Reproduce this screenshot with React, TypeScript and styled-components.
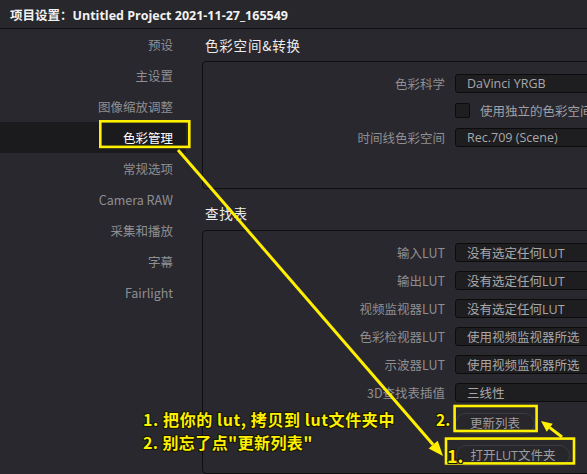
import React from "react";
import styled, { createGlobalStyle } from "styled-components";

const GlobalStyle = createGlobalStyle`
  html, body {
    margin: 0;
    padding: 0;
    background: #29282e;
    overflow: hidden;
  }
`;

const FONT = `"Open Sans", "Noto Sans CJK SC", "Noto Sans", sans-serif`;
const CJK = `"Noto Sans CJK SC", "Noto Sans", sans-serif`;
const YELLOW = "#fff000";

const Window = styled.div`
  position: relative;
  width: 587px;
  height: 474px;
  overflow: hidden;
  background: #29282e;
  display: flex;
  flex-direction: column;
  font-family: ${FONT};
`;

const TitleBar = styled.div`
  height: 28px;
  flex: none;
  display: flex;
  align-items: center;
  padding-left: 10px;
  background: #28272c;
  border-bottom: 1px solid #101012;
  color: #f2f2f2;
  font-weight: 700;
  font-size: 12.5px;
  white-space: nowrap;
`;

const Body = styled.div`
  flex: 1;
  display: flex;
  min-height: 0;
`;

const Sidebar = styled.nav`
  width: 186px;
  flex: none;
  display: flex;
  flex-direction: column;
`;

const NavItem = styled.div<{ $active?: boolean }>`
  height: 31px;
  display: flex;
  align-items: center;
  justify-content: flex-end;
  padding-right: 13px;
  font-family: ${CJK};
  font-size: 12.5px;
  color: ${(p) => (p.$active ? "#ffffff" : "#8f8f93")};
  background: ${(p) => (p.$active ? "#1b1b1e" : "transparent")};
`;

const Main = styled.main`
  flex: 1;
  display: flex;
  flex-direction: column;
  padding-left: 16px;
  min-width: 0;
`;

const SectionTitle = styled.div<{ $h: number; $pb: number }>`
  height: ${(p) => p.$h}px;
  flex: none;
  display: flex;
  align-items: flex-end;
  box-sizing: border-box;
  padding: 0 0 ${(p) => p.$pb}px 3px;
  font-family: ${CJK};
  font-size: 13.5px;
  letter-spacing: 0.8px;
  line-height: 17px;
  color: #ececec;
`;

const Panel = styled.section<{ $pb: number; $grow?: boolean }>`
  width: 420px;
  flex: ${(p) => (p.$grow ? "1" : "none")};
  box-sizing: border-box;
  border: 1px solid #0e0e10;
  border-radius: 4px 0 0 4px;
  padding: 12px 0 ${(p) => p.$pb}px 0;
`;

const FormGrid = styled.div<{ $gap: number }>`
  display: grid;
  grid-template-columns: 242px 1fr;
  column-gap: 10px;
  row-gap: ${(p) => p.$gap}px;
  align-items: center;
`;

const Label = styled.div`
  text-align: right;
  font-family: ${CJK};
  font-size: 12.5px;
  line-height: 19px;
  color: #8f8f93;
  white-space: nowrap;
`;

const Field = styled.div`
  width: 160px;
  height: 19px;
  box-sizing: border-box;
  display: flex;
  align-items: center;
  padding-left: 11px;
  background: #1e1e21;
  border: 1px solid #0c0c0d;
  border-radius: 3px;
  font-family: ${FONT};
  font-size: 12.5px;
  color: #a8a8ab;
  white-space: nowrap;
  overflow: hidden;
`;

const CheckRow = styled.div`
  display: flex;
  align-items: center;
  gap: 10px;
  height: 15px;
  white-space: nowrap;
  font-family: ${CJK};
  font-size: 12.5px;
  color: #a0a0a4;
`;

const CheckBox = styled.span`
  width: 15px;
  height: 15px;
  box-sizing: border-box;
  flex: none;
  background: #1e1e21;
  border: 1px solid #0c0c0d;
  border-radius: 2px;
`;

const Pill = styled.button<{ $w: number }>`
  width: ${(p) => p.$w}px;
  height: 21px;
  box-sizing: border-box;
  padding: 0;
  border: 1px solid #3b3b41;
  border-radius: 11px;
  background: #27262b;
  color: #9d9da1;
  font-family: ${FONT};
  font-size: 12.5px;
  line-height: 19px;
  text-align: center;
  white-space: nowrap;
`;

const ButtonCell = styled.div<{ $ml: number }>`
  margin-left: ${(p) => p.$ml}px;
`;

/* ---------- annotation overlay ---------- */

const Overlay = styled.div`
  position: absolute;
  inset: 0;
  pointer-events: none;
`;

const OverlaySvg = styled.svg`
  position: absolute;
  left: 0;
  top: 0;
`;

const Note = styled.div<{ $x: number; $y: number; $size: number; $ls?: number }>`
  position: absolute;
  left: ${(p) => p.$x}px;
  top: ${(p) => p.$y}px;
  font-family: ${CJK};
  font-weight: 700;
  font-size: ${(p) => p.$size}px;
  letter-spacing: ${(p) => p.$ls ?? 0}px;
  line-height: 23px;
  color: ${YELLOW};
  white-space: nowrap;
  text-shadow: 0 0 1px #000, 1px 1px 0 #1a1a00, -1px -1px 0 #1a1a00, 1px -1px 0 #1a1a00, -1px 1px 0 #1a1a00;
`;

const navItems = [
  "预设",
  "主设置",
  "图像缩放调整",
  "色彩管理",
  "常规选项",
  "Camera RAW",
  "采集和播放",
  "字幕",
  "Fairlight",
];

const lutRows: [string, string][] = [
  ["输入LUT", "没有选定任何LUT"],
  ["输出LUT", "没有选定任何LUT"],
  ["视频监视器LUT", "没有选定任何LUT"],
  ["色彩检视器LUT", "使用视频监视器所选"],
  ["示波器LUT", "使用视频监视器所选"],
  ["3D查找表插值", "三线性"],
];

function arrowHead(tip: { x: number; y: number }, tail: { x: number; y: number }, l: number, w: number) {
  const len = Math.hypot(tip.x - tail.x, tip.y - tail.y);
  const ux = (tip.x - tail.x) / len;
  const uy = (tip.y - tail.y) / len;
  const bx = tip.x - l * ux;
  const by = tip.y - l * uy;
  const nx = -uy;
  const ny = ux;
  return {
    base: { x: bx, y: by },
    points: `${tip.x},${tip.y} ${bx + w * nx},${by + w * ny} ${bx - w * nx},${by - w * ny}`,
  };
}

function Annotations() {
  const tip1 = { x: 443, y: 456 };
  const tail1 = { x: 178, y: 150 };
  const h1 = arrowHead(tip1, tail1, 15, 6);
  const tip2 = { x: 541, y: 421 };
  const tail2 = { x: 562, y: 437 };
  const h2 = arrowHead(tip2, tail2, 11, 5);

  return (
    <Overlay>
      <OverlaySvg width="587" height="474" viewBox="0 0 587 474">
        <g fill="none" stroke={YELLOW} strokeWidth="2.6">
          <rect x="100.3" y="121.3" width="89" height="25.6" />
          <rect x="454.6" y="406" width="82" height="25" />
          <rect x="446" y="438.6" width="128" height="24.8" />
        </g>
        <line x1={tail1.x} y1={tail1.y} x2={h1.base.x} y2={h1.base.y} stroke={YELLOW} strokeWidth="3" />
        <polygon points={h1.points} fill={YELLOW} />
        <line x1={tail2.x} y1={tail2.y} x2={h2.base.x} y2={h2.base.y} stroke={YELLOW} strokeWidth="3" />
        <polygon points={h2.points} fill={YELLOW} />
      </OverlaySvg>
      <Note $x={143} $y={408} $size={16} $ls={0.6}>
        1. 把你的 lut, 拷贝到 lut文件夹中
      </Note>
      <Note $x={143} $y={431} $size={16} $ls={0.4}>
        2. 别忘了点"更新列表"
      </Note>
      <Note $x={436} $y={408} $size={15.5}>
        2.
      </Note>
      <Note $x={447} $y={444} $size={18}>
        1.
      </Note>
    </Overlay>
  );
}

export default function App() {
  return (
    <>
      <GlobalStyle />
      <Window>
        <TitleBar>项目设置：Untitled Project 2021-11-27_165549</TitleBar>
        <Body>
          <Sidebar>
            {navItems.map((n) => (
              <NavItem key={n} $active={n === "色彩管理"}>
                {n}
              </NavItem>
            ))}
          </Sidebar>
          <Main>
            <SectionTitle $h={32} $pb={7}>色彩空间&amp;转换</SectionTitle>
            <Panel $pb={41}>
              <FormGrid $gap={10}>
                <Label>色彩科学</Label>
                <Field>DaVinci YRGB</Field>
                <span />
                <CheckRow>
                  <CheckBox />
                  使用独立的色彩空间和伽马
                </CheckRow>
                <Label>时间线色彩空间</Label>
                <Field>Rec.709 (Scene)</Field>
              </FormGrid>
            </Panel>
            <SectionTitle $h={41} $pb={8}>查找表</SectionTitle>
            <Panel $pb={0} $grow>
              <FormGrid $gap={9}>
                {lutRows.map(([l, v]) => (
                  <React.Fragment key={l}>
                    <Label>{l}</Label>
                    <Field>{v}</Field>
                  </React.Fragment>
                ))}
                <span />
                <ButtonCell $ml={0}>
                  <Pill $w={80}>更新列表</Pill>
                </ButtonCell>
                <span />
                <ButtonCell $ml={1}>
                  <Pill $w={114}>打开LUT文件夹</Pill>
                </ButtonCell>
              </FormGrid>
            </Panel>
          </Main>
        </Body>
        <Annotations />
      </Window>
    </>
  );
}
